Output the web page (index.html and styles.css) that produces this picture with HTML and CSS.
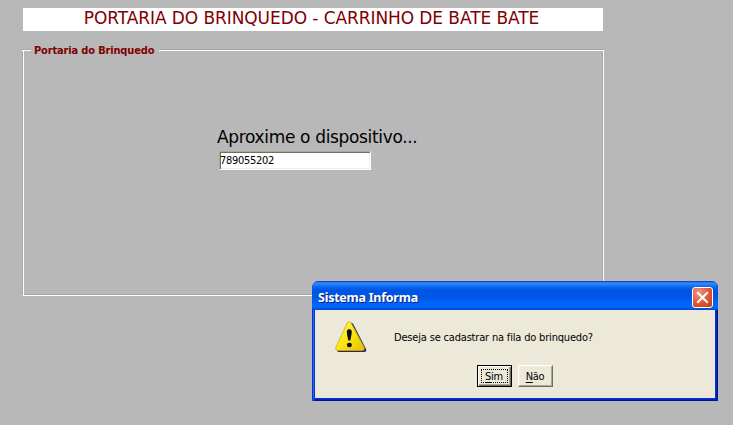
FILE: index.html
```html
<!DOCTYPE html>
<html lang="pt-BR">
<head>
<meta charset="utf-8">
<title>Portaria do Brinquedo</title>
<link rel="stylesheet" href="styles.css">
</head>
<body>
<main class="screen">
  <h1 class="banner"><span>PORTARIA DO BRINQUEDO - CARRINHO DE BATE BATE</span></h1>
  <section class="group">
    <div class="group-top"><i class="line line-start"></i><h2 class="legend"><span>Portaria do Brinquedo</span></h2><i class="line line-end"></i></div>
    <div class="group-body">
      <div class="form">
        <label class="prompt" for="device">Aproxime o dispositivo...</label>
        <input class="device" id="device" type="text" value="789055202">
      </div>
    </div>
  </section>
</main>
<div class="dialog" role="dialog">
  <header class="titlebar">
    <span class="title">Sistema Informa</span>
    <button class="close" aria-label="Fechar">
      <svg width="21" height="21" viewBox="0 0 21 21"><path d="M6 6l9 9M15 6l-9 9" stroke="#fff" stroke-width="2.1" stroke-linecap="square"/></svg>
    </button>
  </header>
  <div class="content">
    <div class="message">
      <svg class="warning" width="32" height="32" viewBox="0 0 32 32">
        <defs><linearGradient id="y" x1="0" y1="0" x2="1" y2="1"><stop offset="0" stop-color="#fffb70"/><stop offset=".5" stop-color="#fbe710"/><stop offset="1" stop-color="#e9bd00"/></linearGradient></defs>
        <path d="M14.5 2Q16.5.5 18.2 3L31 28Q32 31 29 31H4Q2 31 2 29Z" fill="#27246a"/>
        <path d="M12.3 1.8Q14.2-1 16 1.8L29 26.2Q30.2 29.3 27 29.5H2.5Q-.3 29.3.8 26.5Z" fill="url(#y)" stroke="#c9ac12" stroke-width=".8"/>
        <path d="M11.8 10.5Q12 8 14.3 8T16.8 10.5Q16.6 14.5 15.2 19.5H13.4Q12 14.5 11.8 10.5Z" fill="#0b0924"/>
        <ellipse cx="14.4" cy="24" rx="2.5" ry="2.3" fill="#0b0924"/>
      </svg>
      <p class="question">Deseja se cadastrar na fila do brinquedo?</p>
    </div>
    <div class="actions">
      <button class="button default"><span class="focus"><u>S</u>im</span></button>
      <button class="button"><span class="caption"><u>N</u>ão</span></button>
    </div>
  </div>
</div>
</body>
</html>
```
FILE: styles.css
```css
* { box-sizing: border-box; }
body { margin: 0; background: #b8b8b8; color: #000; font-family: "DejaVu Sans Condensed", "DejaVu Sans", sans-serif; width: 733px; height: 425px; overflow: hidden; }
.screen { padding: 8px 0 0 22px; width: 604px; }
.banner { margin: 0 1px; width: 580px; height: 23px; padding-right: 3px; background: #fff; color: #800000; font: 400 17px/21px "DejaVu Sans", sans-serif; text-align: center; white-space: nowrap; }
.banner span { letter-spacing: -0.08px; }
.group { width: 582px; height: 247px; margin-top: 18px; display: flex; flex-direction: column; }
.group-top { display: flex; height: 2px; }
.line { height: 2px; border-top: 1px solid #aca899; border-bottom: 1px solid #fff; }
.line-start { width: 9px; }
.line-end { flex: 1; }
.legend { margin: -6px 0 0; width: 128px; height: 16px; padding-left: 3px; color: #800000; font: 700 11px/16px "DejaVu Sans Condensed", sans-serif; letter-spacing: -.16px; white-space: nowrap; }
.group-body { flex: 1; border-left: 1px solid #aca899; border-right: 1px solid #fff; border-bottom: 1px solid #fff; box-shadow: inset 1px 0 #fff, inset -1px -1px #aca899; padding: 75px 0 0 193px; }
.form { display: flex; flex-direction: column; align-items: flex-start; }
.prompt { padding-left: 1px; font: 400 17px/22px "DejaVu Sans", sans-serif; letter-spacing: -.34px; white-space: nowrap; }
.device { margin: 3px 0 0 3px; width: 152px; height: 19px; padding: 0; border: 1px solid; border-color: #aca899 #fff #fff #aca899; box-shadow: inset 1px 1px #716f64, inset -1px -1px #f1efe2; background: #fff; border-radius: 0; font: 400 11px/15px "DejaVu Sans Condensed", sans-serif; letter-spacing: -.3px; }
.dialog { position: absolute; left: 312px; top: 281px; width: 406px; height: 120px; padding: 0 3px 3px; border-radius: 7px 7px 0 0; background: #0831d9; box-shadow: inset 1px 0 #0831d9, inset 2px 0 #166aee, inset -1px -1px #001590, inset -2px -2px #0026c2; overflow: hidden; }
.titlebar { display: flex; align-items: center; height: 29px; margin: 0 -3px; padding: 2px 4px 0 6px; background: linear-gradient(#0831c9 0, #328cff 2px, #2a85f8 3px, #0868ec 6px, #0054e3 9px, #0055e5 16px, #0065fb 22px, #0066ff 26px, #0052e0 28px, #0040c8 29px); }
.title { flex: 1; padding-top: 2px; color: #fff; font: 700 12.5px/20px "Noto Sans", sans-serif; letter-spacing: -.25px; text-shadow: 1px 1px #0a2075; white-space: nowrap; }
.close { width: 21px; height: 21px; margin: 2px 1px 0 0; padding: 0; border: 1px solid #fff; border-radius: 3px; background: radial-gradient(circle at 30% 25%, #ee967d, #e1502c 60%, #c43c16); }
.close svg { display: block; margin: -1px; fill: none; }
.content { height: 88px; background: #ece9d8; }
.message { display: flex; height: 55px; padding: 11px 0 0 20px; }
.warning { flex: none; }
.question { margin: 9px 0 0 27px; font: 400 11px/16px "DejaVu Sans Condensed", sans-serif; letter-spacing: -.18px; white-space: nowrap; }
.actions { display: flex; gap: 6px; padding-left: 162px; }
.button { width: 35px; height: 22px; padding: 0; border: 1px solid; border-color: #fff #716f64 #716f64 #fff; box-shadow: inset -1px -1px #aca899, inset 1px 1px #f1efe2; background: #ece9d8; display: flex; align-items: center; justify-content: center; font: 400 11px/14px "DejaVu Sans Condensed", sans-serif; letter-spacing: -.3px; }
.button u { text-underline-offset: 2px; text-decoration-skip-ink: none; }
.caption { padding: 1px 1px 0 0; }
.default { border-color: #000; box-shadow: inset 1px 1px #fff, inset -1px -1px #716f64, inset -2px -2px #aca899; }
.focus { width: 27px; height: 14px; padding-right: 1px; border: 1px dotted #000; line-height: 13px; text-align: center; }
```
